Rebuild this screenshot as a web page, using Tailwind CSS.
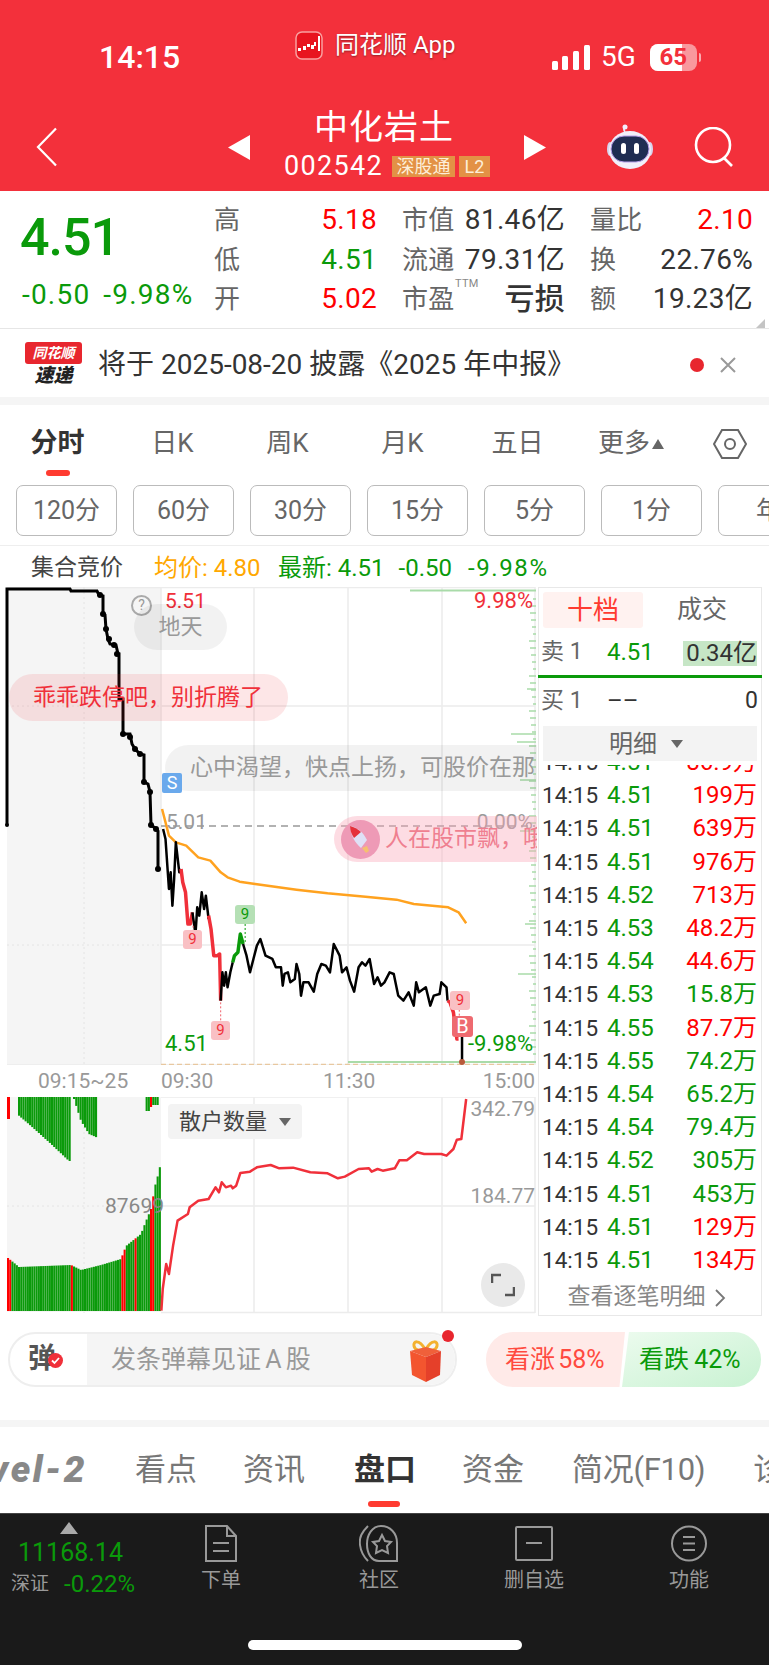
<!DOCTYPE html>
<html lang="zh-CN">
<head>
  <meta charset="UTF-8" />
  <meta name="viewport" content="width=device-width, initial-scale=1.0" />
  <title>中化岩土 分时</title>
  <script src="https://cdn.jsdelivr.net/npm/@tailwindcss/browser@4"></script>
</head>
<body class="w-[769px] h-[1665px] overflow-hidden bg-white font-['Roboto','Noto_Sans_CJK_SC',sans-serif] text-[#333]">

  <!-- header -->
  <header class="relative h-[191px] bg-[#f3303b] text-white">
    <div class="flex h-[90px]">
      <div class="w-[295px] pl-[99px] pt-[36px] text-[32px] leading-[42px] font-medium">14:15</div>
      <div class="flex items-center gap-[12px] pt-[2px] h-[88px] w-[250px] [text-shadow:0_1px_2px_rgba(0,0,0,.4)] text-[24px]">
        <svg width="28" height="29" viewBox="0 0 28 29"><rect x="1" y="1" width="26" height="27" rx="6" fill="#e8141f" stroke="#f9a0a0" stroke-width="1.5"/><g fill="#fff"><rect x="3" y="17" width="3" height="3"/><rect x="8" y="15" width="3" height="4"/><rect x="12" y="13" width="3" height="3"/><rect x="16" y="14" width="3" height="4"/><rect x="19" y="11" width="2" height="4"/><rect x="23" y="5" width="2" height="15"/></g></svg>
        <span>同花顺 App</span>
      </div>
      <div class="flex items-center h-[114px] pl-[7px]">
        <svg width="38" height="25" viewBox="0 0 38 25" fill="#fff"><rect x="0" y="16" width="6" height="9" rx="1.5"/><rect x="10" y="11" width="6" height="14" rx="1.5"/><rect x="21" y="6" width="6" height="19" rx="1.5"/><rect x="32" y="0" width="6" height="25" rx="1.5"/></svg>
        <span class="ml-[11px] text-[28px]">5G</span>
        <div class="relative ml-[14px] w-[47px] h-[27px] rounded-[8px] bg-white/50 overflow-hidden">
          <div class="w-[32px] h-full bg-white"></div>
          <span class="absolute inset-0 text-center text-[#f3303b] text-[24px] leading-[27px] font-bold">65</span>
        </div>
        <div class="ml-[2px] w-[2px] h-[9px] rounded-r bg-white/60"></div>
      </div>
    </div>
    <div class="flex">
      <div class="w-[228px] pl-[36px] pt-[37px]">
        <svg width="22" height="40" viewBox="0 0 22 40" fill="none" stroke="#fff" stroke-width="2.2"><path d="M20 1.5 2 20l18 18.500"/></svg>
      </div>
      <div class="pt-[45px]">
        <svg width="22" height="25" viewBox="0 0 22 25" fill="#fff"><path d="M22 0v25L0 12.500z"/></svg>
      </div>
      <div class="w-[274px] flex flex-col items-center">
        <div class="text-[34px] leading-[44px] tracking-[1px] mt-[15px] mr-[6px]">中化岩土</div>
        <div class="flex items-center mt-[2px]">
          <span class="text-[27px] leading-[30px] tracking-[1.3px]">002542</span>
          <span class="ml-[9px] w-[63px] h-[21px] bg-[#e39145] text-[#fdeed8] text-[18px] leading-[21px] text-center">深股通</span>
          <span class="ml-[4px] w-[31px] h-[21px] bg-[#e39145] text-[#fdeed8] text-[18px] leading-[21px] text-center">L2</span>
        </div>
      </div>
      <div class="pt-[45px]">
        <svg width="22" height="25" viewBox="0 0 22 25" fill="#fff"><path d="M0 0v25l22-12.500z"/></svg>
      </div>
      <div class="pl-[60px] pt-[34px]">
        <svg width="48" height="45" viewBox="0 0 48 45">
          <path d="M19 8c-2-2-1-6 2-5" fill="none" stroke="#e6e2f5" stroke-width="2"/><circle cx="19" cy="3" r="2.500" fill="#f2eefc"/>
          <ellipse cx="4" cy="25" rx="3" ry="7" fill="#d8d4ee"/><ellipse cx="44" cy="25" rx="3" ry="7" fill="#d8d4ee"/>
          <ellipse cx="24" cy="26" rx="21" ry="19" fill="#f1effa"/>
          <rect x="5" y="12" width="38" height="26" rx="13" fill="#1f2d52" stroke="#b59ee8" stroke-width="1"/>
          <rect x="15" y="19" width="5" height="11" rx="2.500" fill="#fff"/><rect x="28" y="19" width="5" height="11" rx="2.500" fill="#fff"/>
        </svg>
      </div>
      <div class="pl-[40px] pt-[37px]">
        <svg width="41" height="40" viewBox="0 0 41 40" fill="none" stroke="#fff" stroke-width="2.600"><circle cx="19" cy="18" r="17"/><path d="m30 31 8 8"/></svg>
      </div>
    </div>
  </header>

  <!-- quote -->
  <section class="relative flex h-[138px] border-b border-[#e6e6e6]">
    <div class="w-[214px] pl-[20px]">
      <div class="text-[52px] leading-[60px] mt-[17px] text-[#0a9a0a] font-medium tracking-[-1px]">4.51</div>
      <div class="flex gap-[13px] ml-[2px] mt-[9px] text-[28px] leading-[36px] tracking-[1.2px] text-[#0a9a0a] whitespace-nowrap"><span>-0.50</span><span>-9.98%</span></div>
    </div>
    <div class="pt-[9px] grid grid-cols-[163px_163px_163px] gap-x-[25px] grid-rows-[40px_39px_40px] items-center text-[28px] leading-[36px] tracking-[.3px]">
      <div class="flex justify-between"><span class="text-[#666] text-[26px]">高</span><span class="text-[#f00]">5.18</span></div>
      <div class="flex justify-between"><span class="text-[#666] text-[26px]">市值</span><span>81.46亿</span></div>
      <div class="flex justify-between"><span class="text-[#666] text-[26px]">量比</span><span class="text-[#f00]">2.10</span></div>
      <div class="flex justify-between"><span class="text-[#666] text-[26px]">低</span><span class="text-[#0a9a0a]">4.51</span></div>
      <div class="flex justify-between"><span class="text-[#666] text-[26px]">流通</span><span>79.31亿</span></div>
      <div class="flex justify-between"><span class="text-[#666] text-[26px]">换</span><span>22.76%</span></div>
      <div class="flex justify-between"><span class="text-[#666] text-[26px]">开</span><span class="text-[#f00]">5.02</span></div>
      <div class="relative flex justify-between"><span class="text-[#666] text-[26px]">市盈</span><span class="absolute left-[53px] -top-[4px] text-[11px] leading-[14px] text-[#888]">TTM</span><span class="text-[30px] font-medium">亏损</span></div>
      <div class="flex justify-between"><span class="text-[#666] text-[26px]">额</span><span>19.23亿</span></div>
    </div>
    <svg class="absolute right-[4px] bottom-0" width="9" height="9" viewBox="0 0 9 9"><path d="M9 0v9H0z" fill="#c4c4c4"/></svg>
  </section>

  <!-- notice -->
  <section class="flex items-center h-[68px] pt-[4px] pl-[25px]">
    <div class="w-[57px] flex flex-col items-center">
      <div class="w-[57px] h-[22px] rounded-[3px] bg-[#e8262e] text-white text-[14px] leading-[22px] text-center italic font-bold">同花顺</div>
      <div class="text-[#222] text-[19px] leading-[24px] italic font-black">速递</div>
    </div>
    <div class="ml-[16px] w-[592px] text-[28px] text-[#333] whitespace-nowrap">将于 2025-08-20 披露《2025 年中报》</div>
    <div class="w-[14px] h-[14px] rounded-full bg-[#e8262e]"></div>
    <svg class="ml-[16px]" width="16" height="16" viewBox="0 0 16 16" stroke="#999" stroke-width="2"><path d="m1 1 14 14M15 1 1 15"/></svg>
  </section>
  <div class="h-[8px] bg-[#f5f5f5]"></div>

  <!-- period tabs -->
  <nav class="relative flex h-[71px] items-center pt-[6px] text-[26px] text-[#666]">
    <span class="w-[115px] text-center font-bold text-[#333] text-[27px]">分时</span>
    <span class="w-[115px] text-center">日K</span>
    <span class="w-[115px] text-center">周K</span>
    <span class="w-[115px] text-center">月K</span>
    <span class="w-[115px] text-center">五日</span>
    <span class="w-[138px] pl-[23px] flex items-center">更多<i class="ml-[2px] w-0 h-0 border-x-[6px] border-x-transparent border-b-[10px] border-b-[#666]"></i></span>
    <svg width="34" height="30" viewBox="0 0 34 30" fill="none" stroke="#666" stroke-width="2"><path d="M9 1h16l8 14-8 14H9L1 15z"/><circle cx="17" cy="15" r="5"/></svg>
    <i class="absolute left-[46px] bottom-0 w-[24px] h-[6px] rounded-full bg-[#ff3b30]"></i>
  </nav>
  <div class="flex gap-[16px] pl-[16px] pt-[9px] h-[70px] overflow-hidden text-[25px] text-[#666] border-b border-[#eee] box-border">
    <span class="shrink-0 w-[101px] h-[51px] rounded-[7px] border border-[#bbb] flex items-center justify-center">120分</span>
    <span class="shrink-0 w-[101px] h-[51px] rounded-[7px] border border-[#bbb] flex items-center justify-center">60分</span>
    <span class="shrink-0 w-[101px] h-[51px] rounded-[7px] border border-[#bbb] flex items-center justify-center">30分</span>
    <span class="shrink-0 w-[101px] h-[51px] rounded-[7px] border border-[#bbb] flex items-center justify-center">15分</span>
    <span class="shrink-0 w-[101px] h-[51px] rounded-[7px] border border-[#bbb] flex items-center justify-center">5分</span>
    <span class="shrink-0 w-[101px] h-[51px] rounded-[7px] border border-[#bbb] flex items-center justify-center">1分</span>
    <span class="shrink-0 w-[101px] h-[51px] rounded-[7px] border border-[#bbb] flex items-center justify-center">年</span>
  </div>

  <!-- legend -->
  <div class="flex items-center h-[41px] pt-[3px] pl-[31px] text-[24px] whitespace-nowrap">
    <span class="w-[123px] text-[#444] text-[23px]">集合竞价</span>
    <span class="w-[124px] text-[#ffa800]">均价: 4.80</span>
    <span class="text-[#0a9a0a]">最新: 4.51</span>
    <span class="ml-[14px] text-[#0a9a0a]">-0.50</span>
    <span class="ml-[16px] text-[#0a9a0a] tracking-[1.6px]">-9.98%</span>
  </div>

  <!-- chart + trades -->
  <section class="flex h-[730px]">
    <div class="w-[537px] shrink-0 flex flex-col">
      <div class="relative h-[478px] overflow-hidden">
        <svg id="main-chart" width="537" height="478" viewBox="0 588 537 478">
          <rect x="7" y="588" width="154" height="478" fill="#f5f5f5"/>
          <g stroke="#ececec" stroke-width="1.500">
            <path d="M7 588.500H535M161 588V1066M254 588V1066M348 588V1066M442 588V1066M535 588V1066M161 707H535M161 946H535M7 1066H535"/>
          </g>
          <path d="M7 707H161M7 946H161M84 588V1066" stroke="#e4e4e4" stroke-dasharray="2 3"/>
          <path d="M161 827H535" stroke="#999" stroke-width="1.500" stroke-dasharray="7 5"/>
          <path d="M161 1065.500H535" stroke="#e8c8a0" stroke-width="1.500" stroke-dasharray="5 3"/>
          <g id="depth-ticks" stroke="#a9dba9" stroke-width="1.500"></g>
          <path d="M410 591.500H536M348 1063H536" stroke="#a9dba9" stroke-width="2"/>
          <polyline fill="none" stroke="#000" stroke-width="3" points="7,826 7,590 70,590 71,592 97,592 99,596 103,597 103,615 105,616 106,630 108,640 110,645 116,646 118,655 119,655 119,700 123,700 123,735 130,735 132,745 135,750 140,755 144,756 144,783 148,785 150,793 151,826 155,829 158,832 158,870"/>
          <g fill="#000"><circle cx="7" cy="826" r="2"/><circle cx="100" cy="596" r="3"/><circle cx="103" cy="615" r="3"/><circle cx="106" cy="630" r="3"/><circle cx="109" cy="640" r="3"/><circle cx="114" cy="646" r="3"/><circle cx="117" cy="655" r="3"/><circle cx="123" cy="735" r="3"/><circle cx="130" cy="738" r="3"/><circle cx="135" cy="750" r="3"/><circle cx="140" cy="755" r="3"/><circle cx="144" cy="783" r="3"/><circle cx="150" cy="793" r="3"/><circle cx="151" cy="826" r="3"/><circle cx="156" cy="830" r="3"/><circle cx="158" cy="870" r="3"/></g>
          <g transform="translate(0 860) scale(.3448 .3333)" fill="none" stroke-linejoin="round">
            <polyline vector-effect="non-scaling-stroke" stroke="#ffa21f" stroke-width="2.500" points="470,-150 490,-70 510,-50 540,-40 575,-5 610,5 640,40 660,55 695,68 740,75 860,92 950,103 1060,113 1150,122 1200,135 1300,145 1330,160 1352,193"/>
            <polyline vector-effect="non-scaling-stroke" stroke="#000" stroke-width="2.500" points="473,-90 480,-60 490,90 495,40 500,140 505,60 510,-50 520,40 525,30"/>
            <polyline vector-effect="non-scaling-stroke" stroke="#f0303a" stroke-width="3.500" points="525,30 530,70 538,100 545,195 552,195 558,160"/>
            <polyline vector-effect="non-scaling-stroke" stroke="#000" stroke-width="2.500" points="558,160 567,225 572,145 578,170 585,100 592,150 597,110 605,180"/>
            <polyline vector-effect="non-scaling-stroke" stroke="#f0303a" stroke-width="3.500" points="605,170 612,210 620,290 630,290 637,285 640,425"/>
            <polyline vector-effect="non-scaling-stroke" stroke="#000" stroke-width="2.500" points="640,425 645,340 650,380 655,340 660,385 668,340 675,310"/>
            <polyline vector-effect="non-scaling-stroke" stroke="#0a9a0a" stroke-width="3.500" points="675,310 680,290 690,280 697,225 705,255"/>
            <polyline vector-effect="non-scaling-stroke" stroke="#000" stroke-width="2.500" points="705,255 715,290 725,340 735,300 745,260 755,240 770,290 790,300 800,325 815,325 820,380 825,345 835,340 842,370 855,360 860,315 868,345 873,410 880,370 895,370 910,398 920,345 932,315 945,320 957,340 968,255 985,290 992,340 1005,325 1015,365 1027,398 1040,325 1050,310 1060,320 1072,300 1085,375 1095,355 1105,380 1115,370 1130,340 1142,345 1155,410 1170,425 1185,400 1200,440 1207,370 1215,400 1235,385 1248,440 1258,410 1275,405 1280,370 1295,385 1298,425"/>
            <polyline vector-effect="non-scaling-stroke" stroke="#f0303a" stroke-width="3.500" points="1298,425 1305,430 1315,460 1325,540 1330,540"/>
            <path vector-effect="non-scaling-stroke" stroke="#000" stroke-width="2.500" d="M1340 510V605"/>
            <path vector-effect="non-scaling-stroke" stroke="#f0606a" stroke-width="1" stroke-dasharray="2 2" d="M640 430V487M1332 452V472M560 200V213"/>
            <path vector-effect="non-scaling-stroke" stroke="#0a9a0a" stroke-width="1" stroke-dasharray="2 2" d="M711 195V250"/>
            <path d="M469 720V 680" stroke="#6aa9ec" stroke-width="3" stroke-dasharray="3 3"/>
          </g>
          <circle cx="462" cy="1063" r="3" fill="#b85a3a"/>
        </svg>
        <!-- overlays -->
        <span class="absolute left-[165px] top-[2px] text-[21px] leading-[24px] text-[#f0303a]">5.51</span>
        <span class="absolute right-[4px] top-[2px] text-[22px] leading-[24px] text-[#f0303a]">9.98%</span>
        <span class="absolute left-[166px] top-[223px] text-[21px] leading-[24px] text-[#999]">5.01</span>
        <span class="absolute right-[4px] top-[223px] text-[21px] leading-[24px] text-[#999]">0.00%</span>
        <span class="absolute left-[165px] top-[445px] text-[22px] leading-[24px] text-[#0a9a0a]">4.51</span>
        <span class="absolute right-[4px] top-[445px] text-[22px] leading-[24px] text-[#0a9a0a]">-9.98%</span>
        <span class="absolute left-[131px] top-[8px] w-[21px] h-[21px] rounded-full border-2 border-[#aaa] text-center text-[14px] leading-[17px] text-[#999]">?</span>
        <span class="absolute left-[134px] top-[17px] w-[93px] h-[46px] rounded-full bg-black/5 text-center text-[22px] leading-[46px] text-[#999]">地天</span>
        <span class="absolute left-[9px] top-[87px] h-[47px] pl-[24px] pr-[25px] rounded-full bg-[#f0303a]/12 text-[23px] leading-[47px] text-[#f0303a] whitespace-nowrap">乖乖跌停吧，别折腾了</span>
        <span class="absolute left-[165px] top-[158px] h-[46px] w-[400px] pl-[25px] rounded-l-full bg-black/5 text-[23px] leading-[46px] text-[#999] whitespace-nowrap">心中渴望，快点上扬，可股价在那</span>
        <div class="absolute left-[334px] top-[229px] h-[46px] w-[240px] pl-[7px] rounded-l-full bg-[#f9a8b8]/40 flex items-center gap-[5px] text-[23px] text-[#ef7f90] whitespace-nowrap">
          <svg class="shrink-0" width="39" height="39" viewBox="0 0 39 39"><circle cx="19.500" cy="19.500" r="19.500" fill="#ee9ab6"/><path d="M9 6c7 1 13 6 17 14l-6 8C14 23 10 16 9 6z" fill="#dfe0f6"/><path d="M9 6c4 1 8 3 11 6l-7 6c-2-3-4-7-4-12z" fill="#e5303a"/><path d="M21 28l4 5 3-2-2-5z" fill="#f5c070"/></svg>
          <span>人在股市飘，哦</span>
        </div>
        <span class="absolute left-[162px] top-[186px] w-[20px] h-[20px] rounded-[2px] bg-[#6aa9ec] text-white text-center text-[18px] leading-[20px]">S</span>
        <span class="absolute left-[183px] top-[343px] w-[19px] h-[19px] rounded-[3px] bg-[#f9c0c4] text-[#f0303a] text-center text-[15px] leading-[19px]">9</span>
        <span class="absolute left-[211px] top-[434px] w-[19px] h-[19px] rounded-[3px] bg-[#f9c0c4] text-[#f0303a] text-center text-[15px] leading-[19px]">9</span>
        <span class="absolute left-[235px] top-[318px] w-[20px] h-[19px] rounded-[3px] bg-[#b5e0b5] text-[#0a9a0a] text-center text-[15px] leading-[19px]">9</span>
        <span class="absolute left-[450px] top-[404px] w-[20px] h-[19px] rounded-[3px] bg-[#f9c0c4] text-[#f0303a] text-center text-[15px] leading-[19px]">9</span>
        <span class="absolute left-[452px] top-[429px] w-[21px] h-[21px] rounded-[3px] bg-[#ee6a70] text-white text-center text-[20px] leading-[21px]">B</span>
      </div>
      <div class="relative h-[32px] text-[21px] leading-[32px] text-[#999]">
        <span class="absolute left-[38px]">09:15~25</span>
        <span class="absolute left-[161px]">09:30</span>
        <span class="absolute left-[323px]">11:30</span>
        <span class="absolute right-[2px]">15:00</span>
      </div>
      <div class="relative h-[218px]">
        <svg id="low-chart" width="537" height="218" viewBox="0 1098 537 218">
          <rect x="7" y="1098" width="154" height="215" fill="#f5f5f5"/>
          <g stroke="#ececec" stroke-width="1.500"><path d="M161 1098H535M161 1313.500H535M254 1098V1314M348 1098V1314M442 1098V1314M535 1098V1314M161 1207H535"/></g>
          <path d="M7 1207H161M84 1098V1314" stroke="#e4e4e4" stroke-dasharray="2 3"/>
          <g id="vol-bars"></g>
          <g transform="translate(0 1090) scale(.3448 .3333)"><polyline vector-effect="non-scaling-stroke" fill="none" stroke="#f0303a" stroke-width="2.500" stroke-linejoin="round" points="468,665 472,600 482,525 490,555 502,470 515,395 545,375 550,355 575,335 605,330 625,295 635,310 643,280 655,295 670,290 675,298 685,290 697,252 725,248 745,235 785,228 810,238 850,236 900,250 950,253 980,268 1000,263 1040,240 1070,238 1078,248 1095,240 1110,245 1145,238 1158,214 1180,214 1210,190 1230,195 1280,195 1295,200 1315,180 1325,152 1338,150 1345,90 1352,30"/></g>
        </svg>
        <div class="absolute left-[168px] top-[7px] w-[134px] h-[35px] rounded-[4px] bg-[#f3f3f3] flex items-center justify-center gap-[12px] text-[22px] text-[#444]">散户数量<i class="w-0 h-0 border-x-[6px] border-x-transparent border-t-[8px] border-t-[#666]"></i></div>
        <span class="absolute right-[2px] top-[0px] text-[21px] leading-[24px] text-[#999]">342.79</span>
        <span class="absolute right-[2px] top-[87px] text-[21px] leading-[24px] text-[#999]">184.77</span>
        <span class="absolute right-[373px] top-[97px] text-[21px] leading-[24px] text-[#888]">87699</span>
        <div class="absolute left-[481px] top-[166px] w-[44px] h-[44px] rounded-full bg-[#e9e9e9] flex items-center justify-center">
          <svg width="24" height="24" viewBox="0 0 24 24" fill="none" stroke="#555" stroke-width="2.500"><path d="M1 10V2h9M23 14v8h-9"/></svg>
        </div>
      </div>
    </div>

    <!-- right panel -->
    <div class="ml-[1px] w-[224px] h-[729px] border border-[#e8e8e8] flex flex-col">
      <div class="flex pt-[4px] pl-[4px] h-[41px] text-[25px]">
        <span class="w-[100px] h-[36px] rounded-[3px] bg-[#fff2f0] text-[#ff3b30] text-center leading-[36px] text-[26px]">十档</span>
        <span class="flex-1 text-center leading-[36px] text-[#666]">成交</span>
      </div>
      <div class="relative flex items-center h-[46px] pl-[2px] text-[23px]">
        <span class="w-[66px] text-[#666]">卖 1</span><span class="text-[24px] text-[#0a9a0a]">4.51</span>
        <span class="absolute right-[4px] top-[12px] w-[74px] h-[25px] bg-[#c6e6c6] text-right text-[#333] leading-[25px] text-[24px] whitespace-nowrap">0.34亿</span>
      </div>
      <div class="h-[3px] bg-[#0a9a0a] -mx-px"></div>
      <div class="flex items-center h-[46px] pl-[2px] pr-[3px] text-[23px]">
        <span class="w-[66px] text-[#666]">买 1</span><span class="text-[24px] text-[#333]">––</span><span class="ml-auto">0</span>
      </div>
      <div class="mx-[4px] mt-[2px] pr-[8px] h-[35px] bg-[#f3f3f3] flex items-center justify-center gap-[14px] text-[24px] text-[#666]">明细<i class="w-0 h-0 border-x-[6px] border-x-transparent border-t-[8px] border-t-[#666]"></i></div>
      <div class="mt-[4px] h-[515px] overflow-hidden"><div id="trades" class="-mt-[19px]"></div></div>
      <div class="flex items-center justify-center gap-[8px] flex-1 text-[23px] text-[#888] pr-[7px]">查看逐笔明细<svg width="12" height="18" viewBox="0 0 12 18" fill="none" stroke="#777" stroke-width="1.800"><path d="m2 1 8 8-8 8"/></svg></div>
    </div>
  </section>

  <!-- danmaku input + vote -->
  <section class="relative flex h-[103px] pt-[15px] pl-[8px]">
    <div class="flex w-[449px] h-[55px] rounded-full border-2 border-[#eee] overflow-hidden">
      <div class="relative w-[77px] shrink-0 pl-[18px] text-[28px] leading-[50px] font-bold text-[#555]">弹
        <svg class="absolute left-[38px] top-[19px]" width="15" height="15" viewBox="0 0 15 15"><circle cx="7.500" cy="7.500" r="7.500" fill="#f0303a"/><path d="m4 7.500 2.500 2.500L11 5" fill="none" stroke="#fff" stroke-width="1.800"/></svg>
      </div>
      <div class="flex-1 flex items-center bg-[#f5f5f5] pl-[24px] text-[25px] text-[#999] [word-spacing:-2px] whitespace-nowrap">发条弹幕见证 A 股
        <svg class="ml-[98px] shrink-0" width="33" height="46" viewBox="0 0 33 46"><path d="M16 12C10 2 4 4 5 9s7 5 11 3zm1 0C23 2 29 4 28 9s-7 5-11 3z" fill="none" stroke="#f3b12f" stroke-width="3"/><path d="M1 14 17 10l15 4-15 6z" fill="#f0603a"/><path d="M1 14l16 6v25L3 38z" fill="#f3552f"/><path d="M32 14 17 20v25l14-7z" fill="#e5402a"/></svg>
      </div>
    </div>
    <i class="absolute left-[442px] top-[13px] w-[12px] h-[12px] rounded-full bg-[#e8262e]"></i>
    <div class="ml-[29px] w-[139px] h-[55px] rounded-l-[27px] bg-[#ffeae8] [clip-path:polygon(0_0,100%_0,96%_100%,0_100%)] text-[25px] leading-[55px] text-[#ff4a40] pl-[19px] whitespace-nowrap [word-spacing:-3px]">看涨 58%</div>
    <div class="-ml-[3px] w-[139px] h-[55px] rounded-r-[27px] bg-gradient-to-br from-[#ecfbee] to-[#c8f2d2] [clip-path:polygon(5%_0,100%_0,100%_100%,0_100%)] text-[25px] leading-[55px] text-[#0a9a0a] pl-[17px] whitespace-nowrap [word-spacing:-1px]">看跌 42%</div>
  </section>
  <div class="h-[7px] bg-[#f5f5f5]"></div>

  <!-- section tabs -->
  <nav class="relative flex items-center h-[86px] text-[31px] text-[#777] whitespace-nowrap overflow-hidden">
    <div class="w-[87px] shrink-0 overflow-hidden flex justify-end font-black italic text-[37px] tracking-[2.5px] text-[#888]">Level-2</div>
    <span class="ml-[48px]">看点</span>
    <span class="ml-[46px]">资讯</span>
    <span class="ml-[49px] font-bold text-[#333]">盘口</span>
    <span class="ml-[46px]">资金</span>
    <span class="ml-[48px] tracking-[-0.3px]">简况(F10)</span>
    <span class="ml-[48px]">诊股</span>
    <i class="absolute left-[368px] bottom-[6px] w-[32px] h-[6px] rounded-full bg-[#ff3b30]"></i>
  </nav>

  <!-- bottom bar -->
  <footer class="relative h-[153px] bg-[#1a1a1a] border-t border-[#444] flex text-[#999]">
    <div class="w-[141px] pt-[8px]">
      <div class="ml-[60px] w-0 h-0 border-x-[9px] border-x-transparent border-b-[12px] border-b-[#aaa]"></div>
      <div class="ml-[18px] mt-[4px] text-[#0a9a0a] text-[25px] leading-[30px]">11168.14</div>
      <div class="flex items-center ml-[11px] mt-[1px]"><span class="text-[19px] leading-[30px]">深证</span><span class="ml-[15px] text-[#0a9a0a] text-[24px] leading-[30px]">-0.22%</span></div>
    </div>
    <div class="w-[158px] pl-[2px] pt-[11px] flex flex-col items-center gap-[3px] text-[20px] leading-[30px]">
      <svg width="34" height="37" viewBox="0 0 34 37" fill="none" stroke="#999" stroke-width="2"><path d="M2 1h21l9 10v25H2zM23 1v10h9M9 18h16M9 26h16"/></svg>
      <span>下单</span>
    </div>
    <div class="w-[158px] pl-[2px] pt-[11px] flex flex-col items-center gap-[3px] text-[20px] leading-[30px]">
      <svg width="40" height="37" viewBox="0 0 40 37" fill="none" stroke="#999" stroke-width="2"><path d="M38 36H20C12 36 8 28 8 19S13 1 22 1s16 7 16 17zM9 1C3 7 0 12 1 20s4 12 8 16"/><path d="m23 10 3 6 6 1-4 4 1 7-6-3-6 3 1-7-4-4 6-1z"/></svg>
      <span>社区</span>
    </div>
    <div class="w-[154px] pt-[11px] flex flex-col items-center gap-[3px] text-[20px] leading-[30px]">
      <svg width="38" height="37" viewBox="0 0 38 37" fill="none" stroke="#999" stroke-width="2"><rect x="1" y="2" width="36" height="33" rx="1"/><path d="M11 18h16"/></svg>
      <span>删自选</span>
    </div>
    <div class="w-[156px] pt-[11px] flex flex-col items-center gap-[3px] text-[20px] leading-[30px]">
      <svg width="36" height="37" viewBox="0 0 36 37" fill="none" stroke="#999" stroke-width="2"><circle cx="18" cy="18.500" r="17"/><path d="M12 12h12M12 18.500h12M12 25h12"/></svg>
      <span>功能</span>
    </div>
    <i class="absolute left-[248px] top-[126px] w-[274px] h-[10px] rounded-full bg-white"></i>
  </footer>

<script>
// trades: time, price, amount, red?
const trades = [
  ['4.51','86.9万',1],['4.51','199万',1],['4.51','639万',1],['4.51','976万',1],['4.52','713万',1],
  ['4.53','48.2万',1],['4.54','44.6万',1],['4.53','15.8万',0],['4.55','87.7万',1],['4.55','74.2万',0],
  ['4.54','65.2万',0],['4.54','79.4万',0],['4.52','305万',0],['4.51','453万',0],['4.51','129万',1],['4.51','134万',1]
];
document.getElementById('trades').innerHTML = trades.map(t => `
  <div class="flex items-center h-[33.2px] pl-[3px] pr-[4px] text-[23px] leading-[33px]">
    <span class="w-[65px] text-[22.500px] text-[#333]">14:15</span>
    <span class="text-[24px] text-[#0a9a0a]">${t[0]}</span>
    <span class="ml-auto ${t[2] ? 'text-[#f00]' : 'text-[#0a9a0a]'} text-[24px]">${t[1]}</span>
  </div>`).join('');

// depth ticks at the right edge of the price chart
let ticks = '';
const longTicks = {735:24, 743:18, 781:15, 690:8, 832:15, 925:10, 975:17};
for (let y = 600; y < 1060; y += 7) {
  const len = 2 + (y * 7 % 5);
  ticks += `<path d="M${535 - len} ${y}H536"/>`;
}
Object.keys(longTicks).forEach(y => { ticks += `<path d="M${535 - longTicks[y]} ${y}H536"/>`; });
document.getElementById('depth-ticks').innerHTML = ticks;

// pre-market volume bars, zoom coords turned into page pixels
const lerp = (pts, x) => {
  for (let i = 1; i < pts.length; i++) {
    if (x <= pts[i][0]) {
      const [x0, y0] = pts[i - 1], [x1, y1] = pts[i];
      return y0 + (y1 - y0) * (x - x0) / (x1 - x0);
    }
  }
  return pts[pts.length - 1][1];
};
const bottomEdge = [[7,1259],[18,1268],[70,1266],[80,1271],[100,1266],[120,1260],[125,1247],[140,1235],[145,1222],[150,1210],[154,1187],[157,1176],[160,1163]];
const topEdge = [[16,1115],[30,1127],[50,1145],[68,1162]];
const topEdge2 = [[73,1100],[80,1122],[88,1135],[97,1139]];
const redAt = [8, 70, 121, 123, 135, 151, 153];
let bars = '';
for (let x = 7; x < 160; x += 2.2) {
  const top = lerp(bottomEdge, x);
  const isRed = redAt.some(r => Math.abs(r - x) < 1.2);
  bars += `<rect x="${x}" y="${top}" width="2.100" height="${1312 - top}" fill="${isRed ? '#f00' : '#0a9a0a'}"/>`;
  if (x >= 16 && x <= 69) bars += `<rect x="${x}" y="1098" width="2.100" height="${lerp(topEdge, x) - 1098}" fill="#0a9a0a"/>`;
  if (x >= 73 && x <= 97) bars += `<rect x="${x}" y="1098" width="2.100" height="${lerp(topEdge2, x) - 1098}" fill="#0a9a0a"/>`;
  if (x >= 145 && x <= 158) bars += `<rect x="${x}" y="1098" width="2.100" height="${x < 149 ? 14 : x < 152 ? 10 : 8}" fill="${x > 149 && x < 152 ? '#f00' : '#0a9a0a'}"/>`;
}
bars += '<rect x="7" y="1098" width="3" height="22" fill="#f00"/>';
document.getElementById('vol-bars').innerHTML = bars;
</script>
</body>
</html>
